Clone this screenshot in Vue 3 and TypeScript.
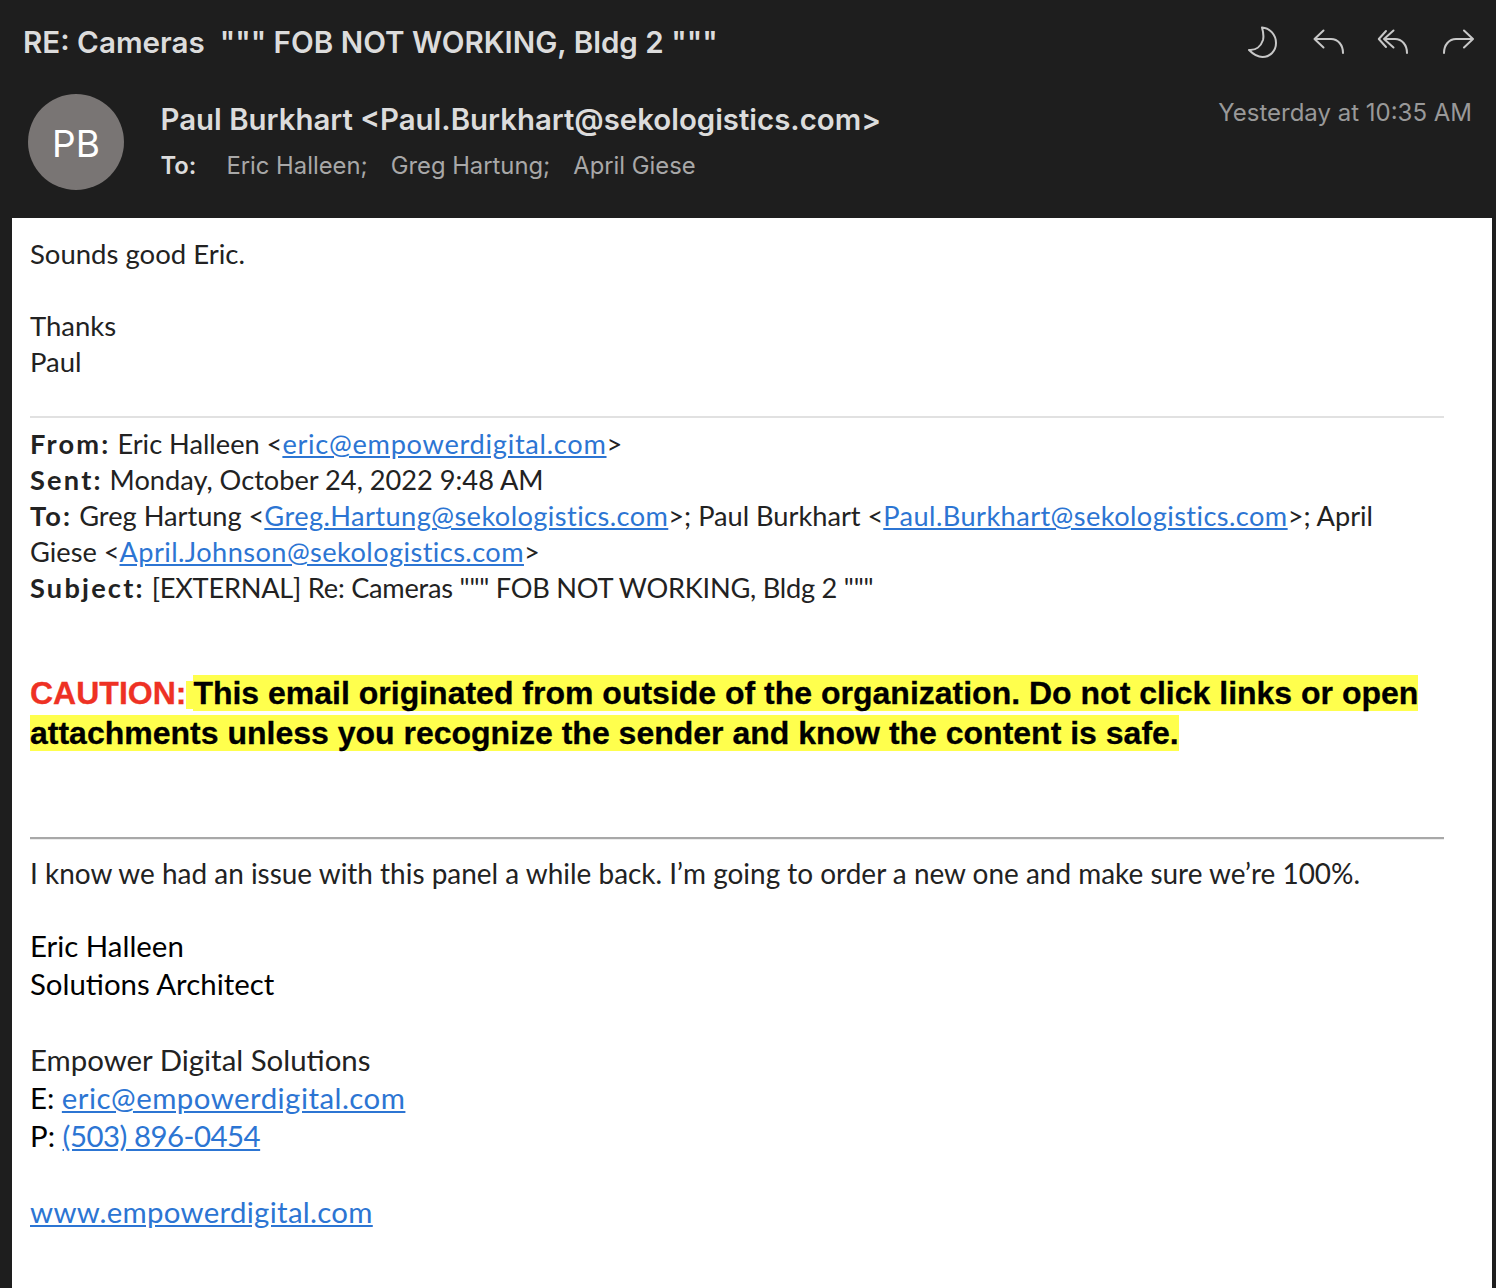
<script setup lang="ts">
const recipients: string[] = ['Eric Halleen;', 'Greg Hartung;', 'April Giese']
</script>

<template>
  <div class="window">
    <header class="head">
      <div class="subject-row">
        <h1 class="subject">RE: Cameras &nbsp;""" FOB NOT WORKING, Bldg 2 """</h1>
        <div class="actions">
          <svg width="32" height="32" viewBox="0 0 32 32"><path d="M15 1.5 C23 2 29 9 29 17 C29 25 23 31 15.5 31 C10.5 31 6 28 2 24 C9 24.5 14 20 16 14 C17 10 16 5 15 1.5 Z" /></svg>
          <svg width="32" height="32" viewBox="0 0 32 32"><path d="M11.5 4.5 L2.5 13 L11.5 21.5 M2.5 13 H19 C26 13 31 19 31 27" /></svg>
          <svg width="32" height="32" viewBox="0 0 32 32"><path d="M9 5 L1.8 13 L9 21 M16.5 4.5 L7 13 L16.5 21.5 M7 13 H18 C25 13 30 19 30 27" /></svg>
          <svg width="32" height="32" viewBox="0 0 32 32"><path d="M22 4.5 L31 13 L22 21.5 M31 13 H14 C7 13 2 19 2 27" /></svg>
        </div>
      </div>
      <div class="meta">
        <div class="avatar">PB</div>
        <div class="people">
          <div class="sender">Paul Burkhart &lt;Paul.Burkhart@sekologistics.com&gt;</div>
          <div class="to">
            <strong>To:</strong>
            <span v-for="r in recipients" :key="r">{{ r }}</span>
          </div>
        </div>
        <time class="when">Yesterday at 10:35 AM</time>
      </div>
    </header>

    <main class="body">
      <section class="reply">
        <p>Sounds good Eric.</p>
        <p class="gap">Thanks<br />Paul</p>
      </section>

      <section class="quoted">
        <p><b>From:</b> Eric Halleen &lt;<a class="wide">eric@empowerdigital.com</a>&gt;</p>
        <p><b>Sent:</b> Monday, October 24, 2022 9:48 AM</p>
        <p><b>To:</b> Greg Hartung &lt;<a class="mid">Greg.Hartung@sekologistics.com</a>&gt;; Paul Burkhart &lt;<a class="mid">Paul.Burkhart@sekologistics.com</a>&gt;; April<br />Giese &lt;<a class="mid">April.Johnson@sekologistics.com</a>&gt;</p>
        <p><b>Subject:</b> <span class="tight">[EXTERNAL] Re: Cameras """ FOB NOT WORKING, Bldg 2 """</span></p>
      </section>

      <p class="caution"><span class="red">CAUTION:</span><mark class="lead">&nbsp;</mark><mark>This email originated from outside of the organization. Do not click links or open attachments unless you recognize the sender and know the content is safe.</mark></p>

      <section class="message">
        <p>I know we had an issue with this panel a while back. I’m going to order a new one and make sure we’re 100%.</p>
        <div class="sig">
          <p class="black">Eric Halleen<br />Solutions Architect</p>
          <p class="gap2">Empower Digital Solutions<br /><span class="black">E:</span> <a class="mail">eric@empowerdigital.com</a><br /><span class="black">P:</span> <a class="phone">(503) 896-0454</a></p>
          <p class="gap2"><a class="site">www.empowerdigital.com</a></p>
        </div>
      </section>
    </main>
  </div>
</template>

<style scoped>
.window {
  height: 1288px;
  overflow: hidden;
  background: #1e1e1e;
  display: flex;
  flex-direction: column;
}
.head {
  height: 218px;
  box-sizing: border-box;
  flex: none;
  padding: 0 24px 0 23px;
  font-family: Inter, "Liberation Sans", sans-serif;
}
.subject-row {
  height: 84px;
  display: flex;
  justify-content: space-between;
  align-items: center;
}
.subject {
  margin: 0;
  font-size: 29.6px;
  font-weight: 600;
  color: #dcdcdc;
  white-space: nowrap;
}
.actions {
  display: flex;
  gap: 33px;
  margin-right: -2px;
}
.actions svg {
  fill: none;
  stroke: #c8c8c8;
  stroke-width: 2;
  stroke-linecap: round;
  stroke-linejoin: round;
}
.meta {
  display: flex;
  align-items: flex-start;
  margin-left: 5px;
  margin-top: 10px;
}
.avatar {
  width: 96px;
  height: 96px;
  box-sizing: border-box;
  padding-top: 3px;
  border-radius: 50%;
  background: #797574;
  color: #fff;
  font-size: 37px;
  display: flex;
  align-items: center;
  justify-content: center;
  flex: none;
}
.people {
  margin-left: 36.5px;
  flex: 1;
}
.sender {
  font-size: 29.4px;
  font-weight: 600;
  color: #dcdcdc;
  line-height: 36px;
  margin-top: 8px;
}
.to {
  display: flex;
  font-size: 23.8px;
  color: #a8a8a8;
  line-height: 30px;
  margin-top: 13px;
  gap: 23px;
}
.to strong {
  color: #dcdcdc;
  font-weight: 600;
  margin-right: 7px;
}
.when {
  font-size: 24px;
  color: #999;
  line-height: 30px;
  margin-top: 4px;
}
.body {
  flex: 1;
  margin: 0 4px 0 12px;
  background: #fff;
  padding: 18px 48px 0 18px;
  font-family: Lato, "Noto Sans", sans-serif;
  font-size: 27.5px;
  line-height: 36px;
  color: #222;
}
p { margin: 0; }
.gap { margin-top: 36px; }
.reply { padding-bottom: 36px; border-bottom: 2px solid #e1e1e1; }
.quoted { padding-top: 8px; font-size: 27.2px; }
b { font-weight: 700; letter-spacing: 2.2px; }
a {
  color: #2c75d3;
  text-decoration: underline;
}
.wide { letter-spacing: 0.72px; }
.mid { letter-spacing: 0.42px; }
.tight { letter-spacing: -0.24px; }
.caution {
  margin-top: 67px;
  font-family: "Liberation Sans", Arial, sans-serif;
  font-weight: 700;
  font-size: 32px;
  line-height: 40px;
  color: #000;
  padding-bottom: 84px;
  border-bottom: 2px solid #a8a8a8;
  box-shadow: 0 1px 0 #ececec;
  -webkit-text-stroke: 0.3px currentColor;
}
.red { color: #ee3124; }
mark {
  background: #ffff4d;
  color: #000;
}
.lead { font-size: 25px; line-height: 1; }
.message { padding-top: 16px; font-size: 27.95px; }
.sig { margin-top: 36px; line-height: 38px; font-size: 29.4px; }
.black { color: #000; }
.gap2 { margin-top: 38px; }
.mail { letter-spacing: 0.48px; }
.site { letter-spacing: 0.3px; }
.phone { letter-spacing: -0.5px; }
</style>
